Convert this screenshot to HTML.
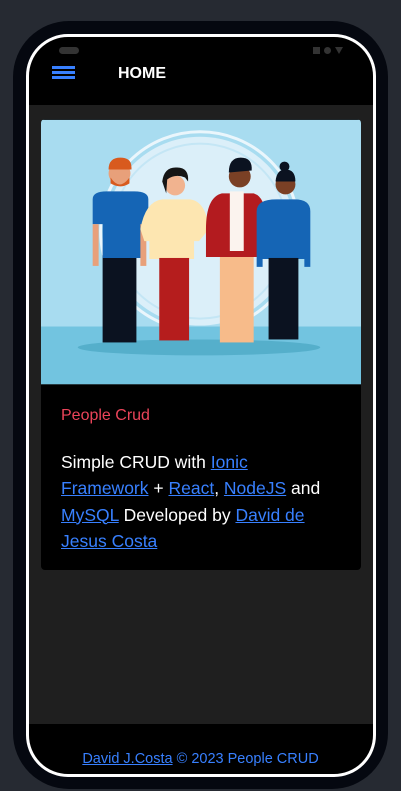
<!DOCTYPE html>
<html><head><meta charset="utf-8"><style>
*{margin:0;padding:0;box-sizing:border-box}
body{width:401px;height:791px;background:#262a32;overflow:hidden;font-family:"Liberation Sans",sans-serif;position:relative}
.phone{position:absolute;left:13px;top:21px;width:375px;height:768px;background:#050810;border-radius:56px}
.screen{position:absolute;left:26px;top:34px;width:350px;height:743px;border:3px solid #fff;border-radius:42px;background:#000;overflow:hidden}
.content{position:absolute;left:0;top:68px;width:100%;height:619px;background:#1f1f1f}
.pill{position:absolute;left:30px;top:10px;width:20px;height:7px;border-radius:4px;background:#333}
.ham{position:absolute;left:23px;top:29px;width:23px}
.ham i{display:block;height:3px;background:#3880ff;margin-bottom:2px}
.title{position:absolute;left:89px;top:28px;color:#fff;font-weight:bold;font-size:16px}
.card{position:absolute;left:12px;top:82px;width:320px;height:451px;background:#000;border-radius:4px;overflow:hidden}
.ct{position:absolute;left:20px;top:288px;color:#eb445a;font-size:16px}
.cb{position:absolute;left:20px;top:330px;color:#fff;font-size:17.5px;line-height:26.3px;white-space:nowrap}
a{color:#3880ff;text-decoration:underline}
.foot{position:absolute;left:0;width:100%;top:751px;text-align:center;color:#3880ff;font-size:14.5px}
</style></head><body>
<div class="phone"></div>
<div class="screen">
 <div class="pill"></div>
 <div style="position:absolute;right:30px;top:10px;display:flex;gap:4px;align-items:center">
  <span style="width:7px;height:7px;background:#333;display:block"></span>
  <span style="width:7px;height:7px;background:#333;border-radius:50%;display:block"></span>
  <span style="width:0;height:0;border-left:4px solid transparent;border-right:4px solid transparent;border-top:7px solid #333;display:block"></span>
 </div>
 <div class="ham"><i></i><i></i><i></i></div>
 <div class="title">HOME</div>
 <div class="content"></div>
 <div class="card">
  <svg width="320" height="266" viewBox="0 0 322 266">
   <rect width="322" height="266" fill="#a8dcf0"/>
   <circle cx="160" cy="112" r="95" fill="#dbeff9"/>
   <circle cx="160" cy="112" r="100" fill="none" stroke="#eaf6fc" stroke-width="3"/>
   <circle cx="160" cy="112" r="88" fill="none" stroke="#c4e6f5" stroke-width="2"/>
   <rect y="208" width="322" height="58" fill="#72c4e0"/>
   <ellipse cx="159" cy="229" rx="122" ry="8" fill="#55afcb"/>
   <circle cx="79" cy="54" r="11" fill="#e8a07a"/><path d="M68 50q0-12 12-12q12 0 11 12z" fill="#d85a1e"/><path d="M70 58q9 14 19 0v6q-9 6-19 0z" fill="#d85a1e"/>
   <rect x="62" y="136" width="34" height="88" fill="#0b1220"/>
   <path d="M52 80q0-8 14-8h28q14 0 14 8v25h-6v34H62v-34h-10z" fill="#1565b5"/>
   <rect x="52" y="105" width="6" height="42" fill="#e8a07a"/><rect x="100" y="105" width="6" height="42" fill="#e8a07a"/>
   <circle cx="135" cy="66" r="10" fill="#f1b38f"/><path d="M122 62q2-15 15-14q12 0 11 14l-3-4q-10-4-18 2l-1 14z" fill="#151515"/>
   <path d="M100 110q5-28 22-30h28q16 2 19 30l-10 12h-5v18h-45v-18h-5z" fill="#fde6b1"/>
   <rect x="119" y="139" width="30" height="83" fill="#b51d1d"/>
   <circle cx="200" cy="57" r="11" fill="#7a4025"/><path d="M189 53q0-15 12-15q12 0 11 13z" fill="#0b1220"/>
   <rect x="180" y="132" width="34" height="92" fill="#f7bb8a"/>
   <path d="M166 110q0-32 16-36h32q14 4 12 36v28h-60z" fill="#b31b1f"/>
   <rect x="190" y="72" width="14" height="60" fill="#fbf3ee"/>
   <circle cx="246" cy="65" r="10" fill="#7a4025"/><circle cx="245" cy="47" r="5" fill="#0b1220"/><path d="M236 62q1-12 10-12q10 0 10 12z" fill="#0b1220"/>
   <path d="M217 92q0-12 20-12h18q16 0 16 12v56h-6v-8h-42v8h-6z" fill="#1565b5"/>
   <rect x="229" y="139" width="30" height="82" fill="#0b1220"/>
  </svg>
  <div class="ct">People Crud</div>
  <div class="cb">Simple CRUD with <a>Ionic</a><br><a>Framework</a> + <a>React</a>, <a>NodeJS</a> and<br><a>MySQL</a> Developed by <a>David de</a><br><a>Jesus Costa</a></div>
 </div>
</div>
<div class="foot"><a>David J.Costa</a> © 2023 People CRUD</div>
</body></html>
